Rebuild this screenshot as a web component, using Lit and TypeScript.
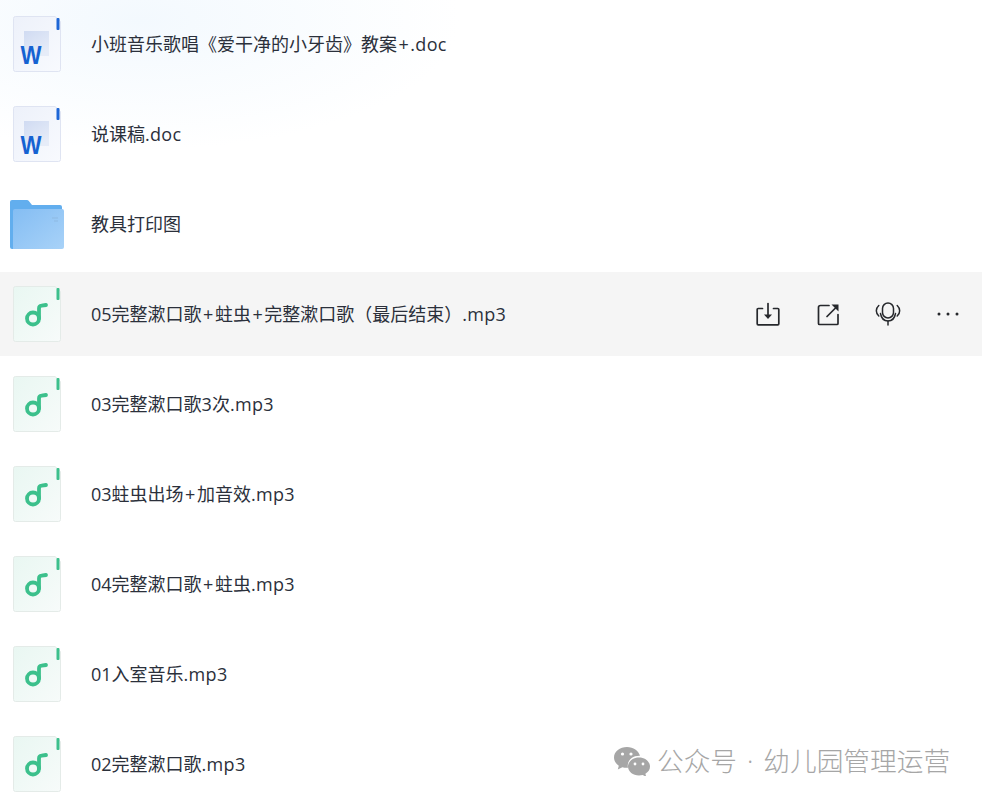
import { LitElement, html, css, svg } from 'lit';
import { customElement, property } from 'lit/decorators.js';

type FileKind = 'doc' | 'folder' | 'audio';

interface FileRow {
    name: string;
    kind: FileKind;
    active?: boolean;
}

const FILES: FileRow[] = [
    { name: '小班音乐歌唱《爱干净的小牙齿》教案+.doc', kind: 'doc' },
    { name: '说课稿.doc', kind: 'doc' },
    { name: '教具打印图', kind: 'folder' },
    { name: '05完整漱口歌+蛀虫+完整漱口歌（最后结束）.mp3', kind: 'audio', active: true },
    { name: '03完整漱口歌3次.mp3', kind: 'audio' },
    { name: '03蛀虫出场+加音效.mp3', kind: 'audio' },
    { name: '04完整漱口歌+蛀虫.mp3', kind: 'audio' },
    { name: '01入室音乐.mp3', kind: 'audio' },
    { name: '02完整漱口歌.mp3', kind: 'audio' },
];

const docIcon = svg`
    <defs>
        <linearGradient id="docBg" x1="0" y1="0" x2="1" y2="1">
            <stop offset="0" stop-color="#edf1fa" />
            <stop offset="1" stop-color="#f8fafe" />
        </linearGradient>
        <linearGradient id="docSheet" x1="0" y1="0" x2="0.6" y2="1">
            <stop offset="0" stop-color="#d0dbf2" />
            <stop offset="1" stop-color="#e6ecf8" />
        </linearGradient>
    </defs>
    <path d="M5.500 2.500H45l5.500 5V55.500a2 2 0 0 1-2 2H5.500a2 2 0 0 1-2-2V4.500a2 2 0 0 1 2-2z" fill="url(#docBg)" stroke="#dfe4f2" />
    <rect x="46.500" y="4" width="3" height="12" rx="1" fill="#1e66d6" />
    <rect x="14" y="17" width="25" height="25" fill="url(#docSheet)" />
    <text x="21" y="49.500" class="w" textLength="21" lengthAdjust="spacingAndGlyphs">W</text>
`;

const folderIcon = svg`
    <defs>
        <linearGradient id="folderBg" x1="0" y1="0" x2="1" y2="1">
            <stop offset="0" stop-color="#84bdf3" />
            <stop offset="1" stop-color="#a8d2f8" />
        </linearGradient>
    </defs>
    <path d="M0 8a2 2 0 0 1 2-2h15a2 2 0 0 1 1.600.8L22 11h28a2 2 0 0 1 2 2v6H0z" fill="#62aeee" />
    <path d="M0 12h3v43H2a2 2 0 0 1-2-2z" fill="#62aeee" />
    <path d="M3 17a2 2 0 0 1 2-2h47a2 2 0 0 1 2 2v36a2 2 0 0 1-2 2H3z" fill="url(#folderBg)" />
    <path d="M42 24h6M44 27h4" stroke="#8db9e2" stroke-width="1" />
`;

const audioIcon = svg`
    <defs>
        <linearGradient id="audioBg" x1="0" y1="0" x2="1" y2="1">
            <stop offset="0" stop-color="#e9f7f2" />
            <stop offset="1" stop-color="#f7fbfa" />
        </linearGradient>
    </defs>
    <path d="M5.500 2.500H45l5.500 5V55.500a2 2 0 0 1-2 2H5.500a2 2 0 0 1-2-2V4.500a2 2 0 0 1 2-2z" fill="url(#audioBg)" stroke="#e4ebe8" />
    <rect x="46.500" y="4" width="3" height="12" rx="1" fill="#3cc08c" />
    <circle cx="23" cy="34.500" r="6" fill="none" stroke="#3cc08c" stroke-width="3.800" />
    <path d="M29 34.500V24.500q0-2.500 2.500-2.800l4.500-.7" fill="none" stroke="#3cc08c" stroke-width="3.800" stroke-linecap="round" />
`;

@customElement('file-icon')
export class FileIcon extends LitElement {
    static override styles = css`
        :host {
            display: block;
            width: 54px;
            height: 60px;
            flex: none;
        }
        svg {
            display: block;
        }
        .w {
            font-family: 'Liberation Sans', Arial, sans-serif;
            font-size: 25px;
            font-weight: 700;
            fill: #1562d2;
            text-anchor: middle;
        }
    `;

    @property() kind: FileKind = 'doc';

    override render() {
        const body = this.kind === 'doc' ? docIcon : this.kind === 'folder' ? folderIcon : audioIcon;
        return html`<svg width="54" height="60" viewBox="0 0 54 60" aria-hidden="true">${body}</svg>`;
    }
}

@customElement('app-root')
export class AppRoot extends LitElement {
    static override styles = css`
        :host {
            display: block;
            position: relative;
            height: 100vh;
            overflow: hidden;
            background: radial-gradient(ellipse 320px 130px at 140px 20px, #f3f9fe 0%, #ffffff 100%);
            font-family: 'Open Sans', 'Noto Sans CJK SC', sans-serif;
        }
        .list {
            display: flex;
            flex-direction: column;
            gap: 6px;
            padding-top: 2px;
        }
        .row {
            display: flex;
            align-items: center;
            flex: none;
            height: 84px;
            padding: 0 22.5px 0 10px;
            gap: 27px;
        }
        .row.active {
            background: #f5f5f5;
        }
        .name {
            font-size: 18px;
            color: #2b303b;
            white-space: nowrap;
            padding-bottom: 2px;
        }
        /* the plus sign sits wider in the original font */
        .plus {
            padding: 0 1.5px;
        }
        .ext {
            letter-spacing: 0.3px;
        }
        .actions {
            display: flex;
            align-items: center;
            gap: 36px;
            margin-left: auto;
        }
        .actions svg {
            display: block;
            width: 24px;
            height: 24px;
            overflow: visible;
            fill: none;
            stroke: #26282c;
            stroke-width: 1.7;
            stroke-linecap: round;
            stroke-linejoin: round;
        }
        .actions .mic {
            stroke-width: 1.5;
        }
        .mark {
            position: absolute;
            left: 614px;
            top: 743px;
            display: flex;
            align-items: center;
            gap: 7px;
            font-size: 26.7px;
            font-weight: 300;
            line-height: 36px;
            word-spacing: 3px;
            color: #a6a6a6;
            white-space: nowrap;
        }
        .mark svg {
            display: block;
        }
    `;

    private renderName(name: string) {
        const dot = name.lastIndexOf('.');
        const stem = dot > 0 ? name.slice(0, dot) : name;
        const ext = dot > 0 ? name.slice(dot) : '';
        const parts = stem.split('+');
        return html`${parts.map((part, i) =>
            i === 0 ? part : html`<span class="plus">+</span>${part}`,
        )}<span class="ext">${ext}</span>`;
    }

    private renderActions() {
        return html`<div class="actions">
            <svg viewBox="0 0 24 24">
                <path d="M6.500 6.500H2.200a1 1 0 0 0-1 1v14.300a1 1 0 0 0 1 1h19.600a1 1 0 0 0 1-1V7.500a1 1 0 0 0-1-1h-4.300" />
                <path d="M12 1.500v12" />
                <path d="M8 12.500h8l-4 4.500z" fill="#26282c" stroke="none" />
            </svg>
            <svg viewBox="0 0 24 24">
                <path d="M13 3.500H4.500a2 2 0 0 0-2 2v16a1 1 0 0 0 1 1h17.500a1 1 0 0 0 1-1V12.500" />
                <path d="M11 14.500l9-9" />
                <path d="M15.500 2.500h7v7z" fill="#26282c" stroke="none" />
            </svg>
            <svg class="mic" viewBox="0 0 24 24">
                <rect x="6.500" y="1" width="11" height="15" rx="5.500" />
                <path d="M4.500 11.500c.8 4.600 3.600 7.500 7.500 7.500s6.700-2.900 7.500-7.500" />
                <path d="M12 19v4" />
                <path d="M2.800 3.500C-.5 6.500-.5 11 2.800 14M21.200 3.500c3.300 3 3.300 7.500 0 10.500" />
            </svg>
            <svg viewBox="0 0 24 24">
                <circle cx="3" cy="12" r="1.500" fill="#26282c" stroke="none" />
                <circle cx="12" cy="12" r="1.500" fill="#26282c" stroke="none" />
                <circle cx="21" cy="12" r="1.500" fill="#26282c" stroke="none" />
            </svg>
        </div>`;
    }

    override render() {
        return html`
            <div class="list">
                ${FILES.map(
                    (f) => html`<div class="row ${f.active ? 'active' : ''}">
                        <file-icon .kind=${f.kind}></file-icon>
                        <span class="name">${this.renderName(f.name)}</span>
                        ${f.active ? this.renderActions() : ''}
                    </div>`,
                )}
            </div>
            <div class="mark">
                <svg width="36" height="30" viewBox="0 0 36 30" aria-hidden="true">
                    <path d="M13 1C6 1 0 5.500 0 11.500c0 3.300 1.800 6.200 4.800 8.200L3.800 23.500l4.500-2.300c1.500.4 3 .6 4.700.6h1C12.500 15 18 9.500 26 9.800 24.500 4.700 19.500 1 13 1z" fill="#a6a6a6" />
                    <path d="M25 11.500c-6 0-11 4-11 9s5 9 11 9c1.300 0 2.600-.2 3.700-.5l3.500 1.800-.8-3c2.800-1.700 4.600-4.300 4.600-7.300 0-5-5-9-11-9z" fill="#a6a6a6" />
                    <circle cx="8.500" cy="8" r="1.600" fill="#fff" />
                    <circle cx="17" cy="8" r="1.600" fill="#fff" />
                    <circle cx="21" cy="18" r="1.400" fill="#fff" />
                    <circle cx="29" cy="18" r="1.400" fill="#fff" />
                </svg>
                <span>公众号 · 幼儿园管理运营</span>
            </div>
        `;
    }
}
